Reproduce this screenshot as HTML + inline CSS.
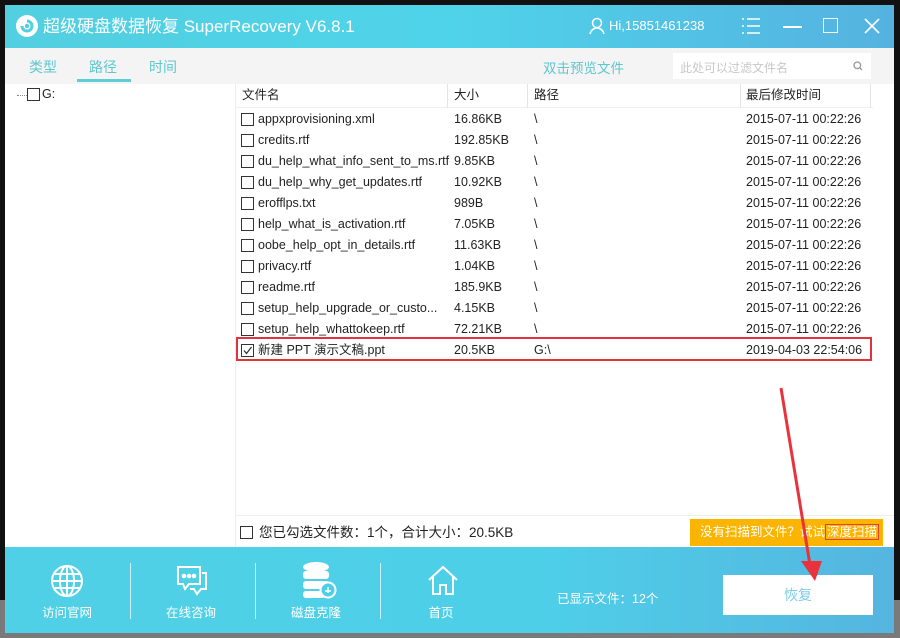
<!DOCTYPE html>
<html><head><meta charset="utf-8"><style>
*{margin:0;padding:0;box-sizing:border-box}
body{width:900px;height:638px;background:#111;position:relative;overflow:hidden;font-family:"Liberation Sans","Noto Sans CJK SC",sans-serif;font-size:12px;color:#222}
.bg{position:absolute;left:0;top:600px;width:900px;height:38px;background:#7a7a7a}
.win{position:absolute;left:5px;top:5px;width:889px;height:628px;background:#fff;overflow:hidden}
.title{position:absolute;left:0;top:0;width:889px;height:43px;background:linear-gradient(90deg,#52cfe0,#4fd3ea 50%,#55b2e0)}
.title .t{position:absolute;left:38px;top:12px;color:#fff;font-size:17px;line-height:20px}
.tabs{position:absolute;left:0;top:43px;width:889px;height:36px;background:#f4f4f4}
.tab{position:absolute;top:9px;color:#5cc7cf;font-size:14px}
.ul{position:absolute;left:72px;top:31px;width:54px;height:3px;background:#5ccfd6}
.search{position:absolute;left:668px;top:5px;width:198px;height:26px;background:#fff;color:#c8c8c8;font-size:12px;padding:6px 7px}
.abs{position:absolute;white-space:nowrap}
.cb{position:absolute;width:13px;height:13px;border:1px solid #333;background:#fff}
.row{position:absolute;left:230px;height:21px;width:640px;font-size:12.5px}
.row span{position:absolute;top:3px;line-height:15px}
.hdr{position:absolute;left:230px;top:79px;width:638px;height:24px;border-bottom:1px solid #eee}
.hdr span{position:absolute;top:4px;font-size:12.5px;line-height:15px}
.vd{position:absolute;top:0;width:1px;height:24px;background:#e4e4e4}
.bottom{position:absolute;left:0;top:542px;width:889px;height:86px;background:linear-gradient(90deg,#4fd0e6,#4ecfe8 60%,#55b5e0)}
.sep{position:absolute;top:16px;width:1px;height:56px;background:rgba(255,255,255,.7)}
.lab{position:absolute;top:58px;color:#fff;font-size:12.5px;width:80px;text-align:center;line-height:16px}
</style></head><body>
<div class="bg"></div>
<div class="win">
 <div class="title">
  <svg class="abs" style="left:10px;top:9px" width="24" height="24" viewBox="0 0 24 24"><circle cx="12" cy="12" r="11" fill="#fff"/><path d="M7 12a5 5 0 1 0 5-5" stroke="#52cfe0" stroke-width="3" fill="none"/><circle cx="12" cy="12" r="2.2" fill="#52cfe0"/></svg>
  <div class="t">超级硬盘数据恢复 SuperRecovery V6.8.1</div>
  <svg class="abs" style="left:583px;top:12px" width="18" height="18" viewBox="0 0 18 18" fill="none" stroke="#fff" stroke-width="1.5"><circle cx="9" cy="6" r="4.5"/><path d="M2 17c1-4 4-6 7-6s6 2 7 6"/></svg>
  <div class="abs" style="left:604px;top:13px;color:#fff;font-size:13px">Hi,15851461238</div>
  <svg class="abs" style="left:736px;top:12px" width="20" height="18" viewBox="0 0 20 18" stroke="#fff" stroke-width="1.6"><path d="M1 2h2M6 2h13M1 9h2M6 9h13M1 16h2M6 16h13"/></svg>
  <div class="abs" style="left:778px;top:21px;width:19px;height:2px;background:#fff"></div>
  <div class="abs" style="left:818px;top:13px;width:15px;height:15px;border:1.6px solid #fff"></div>
  <svg class="abs" style="left:859px;top:13px" width="16" height="16" viewBox="0 0 16 16" stroke="#fff" stroke-width="1.6"><path d="M1 1l14 14M15 1L1 15"/></svg>
 </div>
 <div class="tabs">
  <div class="tab" style="left:24px">类型</div>
  <div class="tab" style="left:84px">路径</div>
  <div class="tab" style="left:144px">时间</div>
  <div class="ul"></div>
  <div class="tab" style="left:538px;font-size:13.5px">双击预览文件</div>
  <div class="search">此处可以过滤文件名<svg class="abs" style="left:180px;top:8px" width="10" height="10" viewBox="0 0 10 10" fill="none" stroke="#999" stroke-width="1.3"><circle cx="4.3" cy="4.3" r="3.3"/><path d="M6.8 6.8L9 9"/></svg></div>
 </div>
 <div class="abs" style="left:12px;top:90px;width:10px;border-top:1px dotted #888"></div>
 <div class="cb" style="left:22px;top:83px"></div>
 <div class="abs" style="left:37px;top:82px;font-size:12.5px">G:</div>
 <div class="abs" style="left:230px;top:79px;width:1px;height:463px;background:#eee"></div>
 <div class="hdr">
  <span style="left:7px">文件名</span><div class="vd" style="left:212px"></div>
  <span style="left:219px">大小</span><div class="vd" style="left:292px"></div>
  <span style="left:299px">路径</span><div class="vd" style="left:505px"></div>
  <span style="left:511px">最后修改时间</span><div class="vd" style="left:635px"></div>
 </div>
 <div class="abs" style="left:231px;top:332px;width:636px;height:24px;border:2px solid #e0333d"></div>
 <div id="rows"></div>
 <div class="abs" style="left:230px;top:510px;width:659px;height:1px;background:#eee"></div>
 <div class="cb" style="left:235px;top:521px"></div>
 <div class="abs" style="left:254px;top:519px;font-size:13.5px;line-height:17px">您已勾选文件数：1个，合计大小：20.5KB</div>
 <div class="abs" style="left:685px;top:514px;width:193px;height:27px;background:#fbb400;color:#fff;font-size:12.5px;padding:6px 0 0 10px;line-height:15px">没有扫描到文件？试试<span style="border:1px solid #e0403a;padding:0 1px">深度扫描</span></div>
 <div class="bottom">
  <svg class="abs" style="left:45px;top:17px" width="34" height="34" viewBox="0 0 34 34" fill="none" stroke="#fff" stroke-width="2"><circle cx="17" cy="17" r="15"/><ellipse cx="17" cy="17" rx="7" ry="15"/><path d="M17 2v30M2 17h30M4 10h26M4 24h26"/></svg>
  <svg class="abs" style="left:170px;top:17px" width="34" height="34" viewBox="0 0 34 34" fill="none" stroke="#fff" stroke-width="2"><path d="M3 3h22v17H14l-4 5-2-5H3z"/><path d="M27 9h4v16h-5l-4 5-3-5h-4"/><circle cx="9" cy="12" r="1.3" fill="#fff"/><circle cx="14" cy="12" r="1.3" fill="#fff"/><circle cx="19" cy="12" r="1.3" fill="#fff"/></svg>
  <svg class="abs" style="left:297px;top:14px" width="36" height="38" viewBox="0 0 36 38"><g fill="#fff"><ellipse cx="14" cy="6" rx="13" ry="5"/><rect x="1" y="10" width="26" height="8" rx="3"/><rect x="1" y="20" width="26" height="8" rx="3"/><rect x="1" y="30" width="22" height="7" rx="3"/></g><circle cx="26" cy="29" r="7.5" fill="#4fcfe6" stroke="#fff" stroke-width="2"/><path d="M23 30h6M26 26v6" stroke="#fff" stroke-width="1.5"/></svg>
  <svg class="abs" style="left:422px;top:18px" width="32" height="32" viewBox="0 0 32 32" fill="none" stroke="#fff" stroke-width="2"><path d="M2 15L16 2l14 13M6 12v17h7v-9h6v9h7V12"/></svg>
  <div class="sep" style="left:125px"></div><div class="sep" style="left:250px"></div><div class="sep" style="left:375px"></div>
  <div class="lab" style="left:22px">访问官网</div>
  <div class="lab" style="left:146px">在线咨询</div>
  <div class="lab" style="left:271px">磁盘克隆</div>
  <div class="lab" style="left:396px">首页</div>
  <div class="abs" style="left:552px;top:41px;color:#fff;font-size:12.5px">已显示文件：12个</div>
  <div class="abs" style="left:718px;top:28px;width:150px;height:40px;background:#fff;color:#7dcde4;font-size:14px;text-align:center;line-height:40px">恢复</div>
 </div>
 <svg class="abs" style="left:0;top:0" width="889" height="628"><path d="M776 383L805 560" stroke="#e8333d" stroke-width="3"/><path d="M796 556L817 556L810 576z" fill="#e8333d"/></svg>
</div>
<script>
var d=[["appxprovisioning.xml","16.86KB","\\","2015-07-11 00:22:26"],["credits.rtf","192.85KB","\\","2015-07-11 00:22:26"],["du_help_what_info_sent_to_ms.rtf","9.85KB","\\","2015-07-11 00:22:26"],["du_help_why_get_updates.rtf","10.92KB","\\","2015-07-11 00:22:26"],["erofflps.txt","989B","\\","2015-07-11 00:22:26"],["help_what_is_activation.rtf","7.05KB","\\","2015-07-11 00:22:26"],["oobe_help_opt_in_details.rtf","11.63KB","\\","2015-07-11 00:22:26"],["privacy.rtf","1.04KB","\\","2015-07-11 00:22:26"],["readme.rtf","185.9KB","\\","2015-07-11 00:22:26"],["setup_help_upgrade_or_custo...","4.15KB","\\","2015-07-11 00:22:26"],["setup_help_whattokeep.rtf","72.21KB","\\","2015-07-11 00:22:26"],["新建 PPT 演示文稿.ppt","20.5KB","G:\\","2019-04-03 22:54:06"]];
var h="";d.forEach(function(r,i){var y=104+i*21;h+='<div class="row" style="top:'+y+'px"><div class="cb" style="left:6px;top:4px">'+(i==11?'<svg width="11" height="11" style="position:absolute;left:0;top:0"><path d="M2 5.5l2.5 3L9.5 2" stroke="#333" stroke-width="1.3" fill="none"/></svg>':'')+'</div><span style="left:23px">'+r[0]+'</span><span style="left:219px">'+r[1]+'</span><span style="left:299px">'+r[2]+'</span><span style="left:511px">'+r[3]+'</span></div>'});
document.getElementById("rows").innerHTML=h;
</script>
</body></html>
